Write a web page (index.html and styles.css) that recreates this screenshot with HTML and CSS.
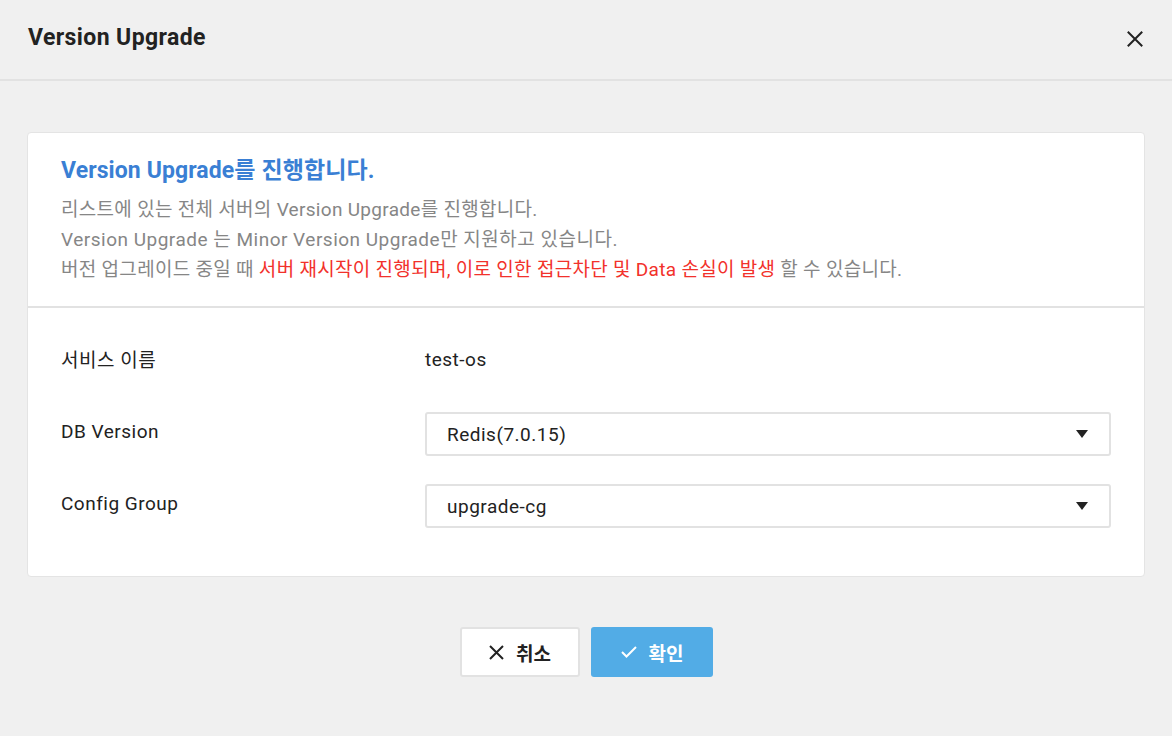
FILE: index.html
```html
<!DOCTYPE html>
<html lang="ko">
<head>
<meta charset="utf-8">
<link rel="stylesheet" href="styles.css">
</head>
<body>
<div class="modal">
  <header class="modal-header">
    <h1 class="modal-title">Version Upgrade</h1>
    <button class="close-btn" aria-label="close">
      <svg width="16" height="16" viewBox="0 0 16 16"><path d="M1.5 1.5L14.5 14.5M14.5 1.5L1.5 14.5" stroke="#222" stroke-width="2" stroke-linecap="square"/></svg>
    </button>
  </header>
  <main class="modal-body">
    <section class="card">
      <div class="notice">
        <h2 class="notice-title">Version Upgrade를 진행합니다.</h2>
        <p class="notice-line">리스트에 있는 전체 서버의 Version Upgrade를 진행합니다.</p>
        <p class="notice-line notice-line-wide">Version Upgrade 는 Minor Version Upgrade만 지원하고 있습니다.</p>
        <p class="notice-line">버전 업그레이드 중일 때 <span class="warn">서버 재시작이 진행되며, 이로 인한 접근차단 및 Data 손실이 발생</span> 할 수 있습니다.</p>
      </div>
      <div class="form">
        <div class="row row-text">
          <div class="label">서비스 이름</div>
          <div class="value">test-os</div>
        </div>
        <div class="row">
          <div class="label">DB Version</div>
          <div class="select"><span>Redis(7.0.15)</span><span class="caret"></span></div>
        </div>
        <div class="row">
          <div class="label">Config Group</div>
          <div class="select"><span>upgrade-cg</span><span class="caret"></span></div>
        </div>
      </div>
    </section>
    <div class="actions">
      <button class="btn btn-cancel">
        <svg width="15" height="15" viewBox="0 0 15 15"><path d="M1 1L14 14M14 1L1 14" stroke="#222" stroke-width="2"/></svg>
        <span>취소</span>
      </button>
      <button class="btn btn-ok">
        <svg width="16" height="12" viewBox="0 0 16 12"><path d="M1 6L5.5 10.5L15 1" stroke="#fff" stroke-width="2" fill="none"/></svg>
        <span>확인</span>
      </button>
    </div>
  </main>
</div>
</body>
</html>
```

FILE: styles.css
```css
* { box-sizing: border-box; }
html, body {
  margin: 0;
  padding: 0;
  background: #f0f0f0;
  font-family: Roboto, "Noto Sans CJK KR", sans-serif;
}
.modal {
  width: 1172px;
  height: 736px;
  background: #f0f0f0;
}
.modal-header {
  height: 81px;
  border-bottom: 2px solid #e2e2e2;
  display: flex;
  align-items: flex-start;
  justify-content: space-between;
  padding: 0 28px 0 28px;
}
.modal-title {
  margin: 23px 0 0 0;
  font-size: 23px;
  font-weight: 700;
  color: #222;
  line-height: 30px;
  letter-spacing: 0.4px;
}
.close-btn {
  margin-top: 31px;
  margin-right: 1px;
  padding: 0;
  border: 0;
  background: transparent;
  width: 16px;
  height: 16px;
  display: flex;
}
.modal-body {
  padding: 51px 27px 0 27px;
}
.card {
  background: #fff;
  border: 1px solid #e4e4e4;
  border-radius: 4px;
  height: 445px;
}
.notice {
  padding: 23px 34px 0 33px;
  height: 175px;
  border-bottom: 2px solid #e2e2e2;
}
.notice-title {
  margin: 0 0 9px 0;
  font-size: 23px;
  font-weight: 700;
  color: #3a7fd4;
  line-height: 30px;
  letter-spacing: 0.1px;
}
.notice-line {
  margin: 0;
  font-size: 19px;
  line-height: 30px;
  color: #868686;
  letter-spacing: 0.3px;
}
.notice-line-wide { letter-spacing: 0.5px; }
.warn { color: #f2312b; }
.form {
  padding: 39px 33px 0 33px;
}
.row {
  display: flex;
  align-items: center;
  height: 44px;
  margin-bottom: 28px;
}
.row-text {
  height: 28px;
  margin-bottom: 37px;
}
.label {
  width: 364px;
  font-size: 19px;
  color: #222;
  letter-spacing: 0.5px;
  position: relative;
  top: -3px;
}
.value {
  font-size: 19px;
  color: #222;
  letter-spacing: 0.5px;
  position: relative;
  top: -2px;
}
.select {
  flex: 1;
  height: 44px;
  border: 2px solid #e2e2e2;
  border-radius: 3px;
  display: flex;
  align-items: center;
  justify-content: space-between;
  padding: 0 21px 0 20px;
  font-size: 19px;
  letter-spacing: 0.5px;
  color: #222;
}
.caret {
  width: 0;
  height: 0;
  border-left: 6px solid transparent;
  border-right: 6px solid transparent;
  border-top: 8px solid #222;
}
.actions {
  display: flex;
  justify-content: center;
  gap: 11px;
  margin-top: 50px;
  padding-left: 1px;
}
.btn {
  height: 50px;
  border-radius: 3px;
  font-family: Roboto, "Noto Sans CJK KR", sans-serif;
  font-size: 19px;
  font-weight: 700;
  display: flex;
  align-items: center;
  justify-content: center;
  gap: 12px;
  cursor: pointer;
  padding: 0;
}
.btn-cancel {
  width: 120px;
  background: #fff;
  border: 2px solid #e2e2e2;
  color: #222;
}
.btn-ok {
  width: 122px;
  background: #52ace6;
  border: 0;
  color: #fff;
}
```
